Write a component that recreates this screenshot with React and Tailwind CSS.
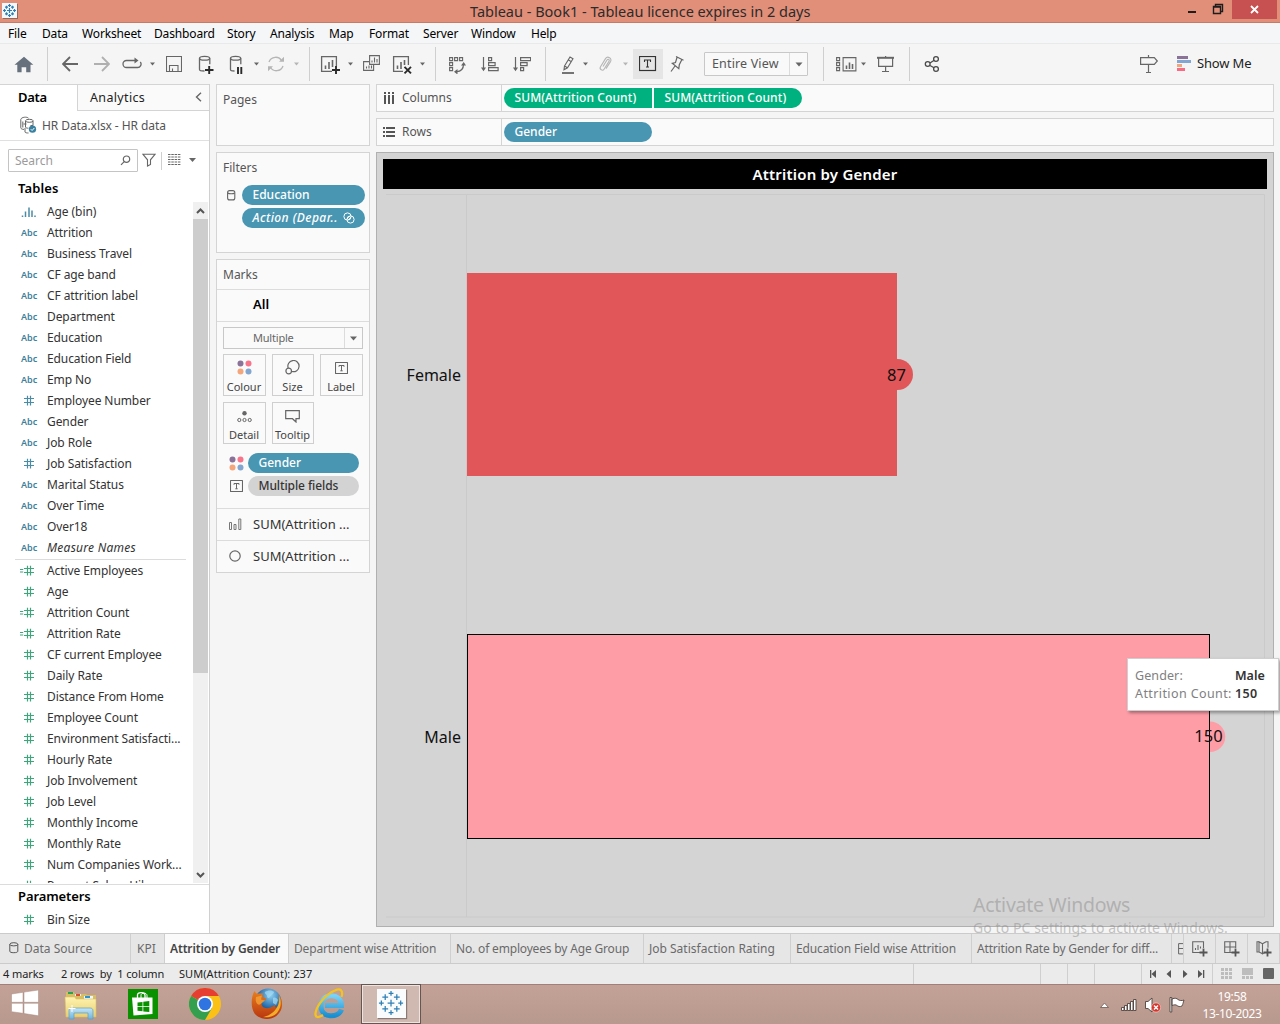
import React from "react";

/* Icon whose drawing uses window coordinates: x/y is the top-left corner of its box. */
function Ico({ x, y = 54, w, h = 20, className = "", children, stroke = "#666" }) {
  return (
    <svg
      width={w}
      height={h}
      viewBox={`${x} ${y} ${w} ${h}`}
      fill="none"
      stroke={stroke}
      strokeWidth="1.3"
      className={`shrink-0 ${className}`}
    >
      {children}
    </svg>
  );
}

function Caret({ className = "", color = "#666" }) {
  return (
    <svg width="7" height="20" viewBox="0 0 7 20" className={`shrink-0 ${className}`}>
      <path d="M1 8.6h5L3.5 11.6z" fill={color} />
    </svg>
  );
}

const Sep = ({ className }) => <div className={`h-[34px] w-px shrink-0 bg-[#cfcfcf] ${className}`} />;

const menus = [
  ["File", "w-[34px]"],
  ["Data", "w-[40px]"],
  ["Worksheet", "w-[72px]"],
  ["Dashboard", "w-[73px]"],
  ["Story", "w-[43px]"],
  ["Analysis", "w-[59px]"],
  ["Map", "w-[40px]"],
  ["Format", "w-[54px]"],
  ["Server", "w-[48px]"],
  ["Window", "w-[60px]"],
  ["Help", "w-[40px]"],
];

function TableauMark({ size }) {
  const plus = (cx, cy, r, k) => <path key={k} d={`M${cx - r} ${cy}h${2 * r}M${cx} ${cy - r}v${2 * r}`} />;
  return (
    <svg width={size} height={size} viewBox="0 0 30 30" fill="none" stroke="#2f7fb5" strokeWidth="1.3">
      {plus(14.5, 14.5, 3.5, "c")}
      {plus(14.5, 4.5, 2.5, "n")}
      {plus(14.5, 24.5, 2.5, "s")}
      {plus(4.5, 14.5, 2.5, "w")}
      {plus(24.5, 14.5, 2.5, "e")}
      {plus(8.5, 8.5, 3, "a")}
      {plus(20.5, 8.5, 3, "b")}
      {plus(8.5, 20.5, 3, "d")}
      {plus(20.5, 20.5, 3, "f")}
    </svg>
  );
}

function TitleBar() {
  return (
    <div className="flex h-[23px] border-b border-[#c77a66] bg-[#e18f79]">
      <div className="mt-[3px] ml-[2px] flex h-[15px] w-[15px] items-center justify-center bg-[#f4f8fb] shadow-[1px_1px_0_#8d6a60]">
        <svg width="15" height="15" viewBox="0 0 15 15" fill="none" stroke="#2f7fb5" strokeWidth="1.2">
          <path d="M5 7.5h5M7.5 5v5M7.5 1v3M6 2.5h3M7.5 11v3M6 12.5h3M1 7.5h3M2.5 6v3M11 7.5h3M12.5 6v3M3 4.2h3M4.5 2.8v3M9 4.2h3M10.5 2.8v3M3 10.8h3M4.5 9.2v3M9 10.8h3M10.5 9.2v3" />
        </svg>
      </div>
      <div className="ml-[453px] w-[345px] text-[14.5px] leading-[23px] whitespace-nowrap text-[#2b2b2b]">
        Tableau - Book1 - Tableau licence expires in 2 days
      </div>
      <svg width="50" height="19" viewBox="0 0 50 19" className="ml-[367px]" fill="none" stroke="#1d1d1d" strokeWidth="1.4">
        <path d="M6 12h8" strokeWidth="2" />
        <path d="M31.5 6.5h7v7h-7zM31 7h8M33.5 6V4.5h7v7H39" />
      </svg>
      <div className="flex h-[19px] w-[45px] items-center justify-center bg-[#c75050]">
        <svg width="9" height="9" viewBox="0 0 9 9" stroke="#fff" strokeWidth="1.8">
          <path d="M1 1l7 7M8 1L1 8" />
        </svg>
      </div>
    </div>
  );
}

function MenuBar() {
  return (
    <div className="flex h-[21px] border-b border-[#e9e9e9] bg-[#f5f6f8] pl-[8px] text-[12px] leading-[21px] tracking-[-0.15px] text-black">
      {menus.map(([m, w]) => (
        <div key={m} className={`shrink-0 whitespace-nowrap ${w}`}>
          {m}
        </div>
      ))}
    </div>
  );
}

const TBox = ({ x, y, w, h, c = "#444" }) => (
  <g stroke={c}>
    <rect x={x + 0.5} y={y + 0.5} width={w - 1} height={h - 1} strokeWidth="1.2" />
    <path
      d={`M${x + w / 2 - 3} ${y + h / 2 - 1.5}v-2h6v2M${x + w / 2} ${y + h / 2 - 3.5}v7M${x + w / 2 - 1.5} ${y + h / 2 + 3.5}h3`}
      strokeWidth="1.1"
    />
  </g>
);

function Toolbar() {
  return (
    <div className="flex h-[40px] items-center bg-[#f5f5f5]">
      <Ico x={14} w={20} className="ml-[14px]" stroke="none">
        <path d="M24 56.8l9.3 8h-2.8v7.4h-4.3v-5h-4.6v5h-4.3v-7.4h-2.8z" fill="#66717d" />
      </Ico>
      <Sep className="ml-[13px]" />
      <Ico x={62} w={16} className="ml-[14px]">
        <path d="M78 64H63.2M70 57l-7 7 7 7" strokeWidth="1.8" />
      </Ico>
      <Ico x={94} w={16} className="ml-[16px]" stroke="#b0b0b0">
        <path d="M94 64h14.8M102 57l7 7-7 7" strokeWidth="1.8" />
      </Ico>
      <Ico x={122} w={20} className="ml-[12px]">
        <path d="M136 60.5h-9.5a3.5 3.5 0 0 0 0 7h11a3.4 3.4 0 0 0 2.8-5.5" />
        <path d="M134.5 57.5l4 3-4 3z" fill="#666" stroke="none" />
      </Ico>
      <Caret className="ml-[7px]" />
      <Ico x={166} w={16} className="ml-[10px]">
        <path d="M166.5 56.5h15v15h-15zM169.500 71v-5.500h8.500V71M172.500 71v-2.500" strokeWidth="1.1" />
      </Ico>
      <Ico x={198} w={16} className="ml-[16px]">
        <path d="M199.5 58.2v11.2c0 .8 2 1.6 5 1.6M209.8 58.2v6" />
        <ellipse cx="204.6" cy="58.2" rx="5.1" ry="1.9" />
        <path d="M205 70h8.5M209.2 66v8" stroke="#2a2a2a" strokeWidth="1.9" />
      </Ico>
      <Ico x={229} w={15} className="ml-[15px]">
        <path d="M230.5 58.2v11.2c0 .8 2 1.6 4 1.6M240.8 58.2v6" />
        <ellipse cx="235.6" cy="58.2" rx="5.1" ry="1.9" />
        <path d="M238 67v7M241.3 67v7" stroke="#2a2a2a" strokeWidth="1.9" />
      </Ico>
      <Caret className="ml-[9px]" />
      <Ico x={267} w={18} className="ml-[7px]" stroke="#b5b5b5">
        <path d="M269 62a7 7 0 0 1 12.8-1M283 66a7 7 0 0 1-12.8 1" />
        <path d="M279 61.8h5v-5zM273 66.2h-5v5z" fill="#b5b5b5" stroke="none" />
      </Ico>
      <Caret className="ml-[8px]" color="#b5b5b5" />
      <Sep className="ml-[9px]" />
      <Ico x={320} w={20} className="ml-[10px]">
        <path d="M332 71.4h-10.4V56.6h14.8V66" />
        <path d="M325.5 69v-3.500M329 69v-7M332.5 67v-7" strokeWidth="1.600" />
        <path d="M332 70h8M336 66v8" stroke="#2a2a2a" strokeWidth="1.9" />
      </Ico>
      <Caret className="ml-[7px]" />
      <Ico x={363} w={18} className="ml-[9px]">
        <path d="M369.6 55.6h9.8v8.8h-9.8zM369 61.6h-5.4v8.8h10V65M372 62.5v-2M374.5 62.5v-5M377 62.5v-3.5M366.5 68.5v-2M369 68.5v-3M371.5 68.5v-3" strokeWidth="1.1" />
      </Ico>
      <Ico x={392} w={20} className="ml-[11px]">
        <path d="M403 71.4h-9.4V56.6h14.8V65" />
        <path d="M397.500 69v-3.500M401 69v-7M404.500 65v-5" strokeWidth="1.600" />
        <path d="M404.5 66.8l6.5 6.5M411 66.8l-6.5 6.5" stroke="#2a2a2a" strokeWidth="1.9" />
      </Ico>
      <Caret className="ml-[7px]" />
      <Sep className="ml-[9px]" />
      <Ico x={448} w={18} className="ml-[12px]">
        <path d="M449.6 57.6h3v3h-3zM454.6 57.6h3v3h-3zM459.6 57.6h3v3h-3zM449.6 62.6h3v3h-3zM449.6 67.6h3v3h-3z" strokeWidth="1.1" />
        <path d="M463.5 64c0 5-3 7.5-7 7.7" />
        <path d="M461 65.5l2.700-3.500 2.300 3.500zM457.500 69v5.500l-3.500-2.700z" fill="#666" stroke="none" />
      </Ico>
      <Ico x={481} w={18} className="ml-[15px]">
        <path d="M483.5 57v13M488.600 57.600h3v3h-3zM488.600 62.600h6.500v3h-6.500zM488.600 67.600h9.500v3h-9.500z" strokeWidth="1.2" />
        <path d="M481 67.500h5l-2.500 3.700z" fill="#666" stroke="none" />
      </Ico>
      <Ico x={513} w={18} className="ml-[14px]">
        <path d="M515.5 57v13M520.600 57.600h10v3h-10zM520.600 62.600h6.500v3h-6.500zM520.600 67.600h3v3h-3z" strokeWidth="1.2" />
        <path d="M513 67.500h5l-2.500 3.700z" fill="#666" stroke="none" />
      </Ico>
      <Sep className="ml-[14px]" />
      <Ico x={561} w={14} className="ml-[15px]">
        <path d="M564.5 66l5.5-9 3 1.8-5.5 9-3.5 2zM564.5 66l3 1.8M568.5 60l2.500 1.500" strokeWidth="1.1" />
        <path d="M562 73h12" strokeWidth="1.8" />
      </Ico>
      <Caret className="ml-[7px]" />
      <Ico x={598} w={15} className="ml-[9px]" stroke="#b5b5b5">
        <path d="M603 66.5l4-6.5c1-1.500 3-.5 2 1.200l-4.800 7.800c-1.500 2.500-5.200.5-3.700-2.200l5-8.200c2-3 7-.3 5 3l-4.500 7" strokeWidth="1.1" />
      </Ico>
      <Caret className="ml-[9px]" color="#b5b5b5" />
      <div className="ml-[4px] flex h-[30px] w-[30px] items-center justify-center bg-[#e5e5e5]">
        <Ico x={639} y={56} w={18} h={16} stroke="#333">
          <TBox x={639} y={56} w={17} h={15} c="#333" />
        </Ico>
      </div>
      <Ico x={670} w={15} className="ml-[7px]">
        <path d="M676 56.5l7.500 3.800M677 57.500l-1.500 5-3.200.8 6.500 5.300.5-3.800 2.500-5M675 66l-4 5.500" strokeWidth="1.2" />
      </Ico>
      <div className="ml-[19px] flex h-[24px] w-[104px] rounded-[1px] border border-[#c8c8c8] bg-[#f9f9f9]">
        <div className="w-[85px] border-r border-[#dcdcdc] pl-[7px] text-[12.5px] leading-[21px] tracking-[0.15px] text-[#555]">Entire View</div>
        <svg width="17" height="22" viewBox="0 0 17 22">
          <path d="M5.5 9.500h7L9 13.500z" fill="#666" />
        </svg>
      </div>
      <Sep className="ml-[15px]" />
      <Ico x={836} w={21} className="ml-[12px]">
        <path d="M836.6 57.600h3v3h-3zM836.600 62.600h3v3h-3zM836.600 67.600h3v3h-3zM843.100 57.600h12.800v13.300h-12.800z" strokeWidth="1.1" />
        <path d="M846.5 69v-3.500M849.500 69v-6.500M852.500 69v-5" strokeWidth="1.6" />
      </Ico>
      <Caret className="ml-[3px]" />
      <Ico x={876} w={19} className="ml-[9px]">
        <path d="M877 57.8h17" strokeWidth="2" />
        <path d="M878.6 58v8.400h14V58M885.600 56v1M885.600 66v5.500M882 71.500h7" strokeWidth="1.2" />
      </Ico>
      <Sep className="ml-[14px]" />
      <Ico x={924} w={16} className="ml-[14px]" stroke="#4b4b4b">
        <path d="M930 63l4.200-2.700M930 65.500l4 2.300" />
        <circle cx="927.7" cy="64" r="2.4" />
        <circle cx="936" cy="59" r="2.4" />
        <circle cx="936" cy="69" r="2.4" />
      </Ico>
      <Ico x={1139} w={20} className="ml-[199px]">
        <path d="M1148.5 55v2M1140.600 57.600h13.700l3 3.400-3 3.400h-13.700zM1148.500 64.500v8M1146 72.500h5" strokeWidth="1.2" />
      </Ico>
      <svg width="15" height="16" viewBox="0 0 15 16" className="ml-[18px] shrink-0">
        <path d="M0 0h11v3H0z" fill="#8a7299" />
        <path d="M0 4h14v3H0z" fill="#82a6cf" />
        <path d="M0 8h5v3H0z" fill="#f3a67c" />
        <path d="M0 12h8v3H0z" fill="#f76c82" />
      </svg>
      <div className="ml-[5px] text-[13px] tracking-[-0.15px] whitespace-nowrap text-[#222]">Show Me</div>
    </div>
  );
}

const dims = [
  ["bin", "Age (bin)"],
  ["abc", "Attrition"],
  ["abc", "Business Travel"],
  ["abc", "CF age band"],
  ["abc", "CF attrition label"],
  ["abc", "Department"],
  ["abc", "Education"],
  ["abc", "Education Field"],
  ["abc", "Emp No"],
  ["num", "Employee Number"],
  ["abc", "Gender"],
  ["abc", "Job Role"],
  ["num", "Job Satisfaction"],
  ["abc", "Marital Status"],
  ["abc", "Over Time"],
  ["abc", "Over18"],
  ["abc", "Measure Names", true],
];
const measures = [
  ["calc", "Active Employees"],
  ["mea", "Age"],
  ["calc", "Attrition Count"],
  ["calc", "Attrition Rate"],
  ["mea", "CF current Employee"],
  ["mea", "Daily Rate"],
  ["mea", "Distance From Home"],
  ["mea", "Employee Count"],
  ["mea", "Environment Satisfacti..."],
  ["mea", "Hourly Rate"],
  ["mea", "Job Involvement"],
  ["mea", "Job Level"],
  ["mea", "Monthly Income"],
  ["mea", "Monthly Rate"],
  ["mea", "Num Companies Work..."],
  ["mea", "Percent Salary Hike"],
];

function FieldIcon({ kind }) {
  if (kind === "abc")
    return <span className="block text-[9px] leading-[22px] font-semibold text-[#3f7f9b]">Abc</span>;
  if (kind === "bin")
    return (
      <svg width="16" height="12" viewBox="0 0 16 12" stroke="#4a8ba5" strokeWidth="1.5" className="mt-[5px]">
        <path d="M1.5 9.500v1.500M4.500 5.500V11M8 1.500V11M11 4.500V11M14 9.500v1.500" />
      </svg>
    );
  const c = kind === "num" ? "#4a8ba5" : "#3ea57c";
  return (
    <svg width="16" height="12" viewBox="0 0 16 12" stroke={c} strokeWidth="1.2" className="mt-[5px] overflow-visible">
      <path d="M3 3.500h10M3 7.500h10M6.500 .8v9.700M9.500 .8v9.700" />
      {kind === "calc" && <path d="M-1 4.500h3.200M-1 7h3.200" />}
    </svg>
  );
}

function FieldRow({ f: [kind, name, it] }) {
  return (
    <div className="flex h-[21px]">
      <div className="w-[26px] shrink-0">
        <FieldIcon kind={kind} />
      </div>
      <div className={`text-[12px] leading-[22px] whitespace-nowrap text-[#333] ${it ? "tracking-[0.25px] italic" : "tracking-[-0.09px]"}`}>{name}</div>
    </div>
  );
}

function DataPane() {
  return (
    <div className="flex w-[210px] shrink-0 flex-col border-r border-[#d0d0d0] bg-white">
      <div className="flex h-[27px] shrink-0">
        <div className="w-[77px] border-t border-[#d4d4d4] pl-[18px] text-[13px] leading-[25px] font-semibold tracking-[-0.3px] text-black">Data</div>
        <div className="flex flex-1 items-center border border-r-0 border-[#d4d4d4] bg-[#fafafa] pl-[12px] text-[12.5px] tracking-[0.35px] text-[#222]">
          <span className="mt-px flex-1">Analytics</span>
          <svg width="7" height="10" viewBox="0 0 7 10" fill="none" stroke="#666" strokeWidth="1.4" className="mr-[7px] mb-[2px]">
            <path d="M6 .8L1.500 5 6 9.200" />
          </svg>
        </div>
      </div>
      <div className="flex h-[30px] shrink-0 border-b border-[#e0e0e0] pl-[20px]">
        <svg width="17" height="18" viewBox="0 0 17 18" fill="none" stroke="#666" strokeWidth="1" className="mt-[5px]">
          <path d="M10.5 9.500H13V5M5.500 5v6c0 .7 1 1.200 3 1.200M.8 3.300v8.500c0 1 1.500 1.600 3.200 1.600M2.800 5.500v6M3.500 8h3M5 12v4c0 .8 2 1 3.500 1" />
          <ellipse cx="9.3" cy="4.8" rx="3.8" ry="1.5" />
          <path d="M.8 3.300C1.500 1 7 .5 8.500 2.200" />
          <circle cx="12.5" cy="13.2" r="3.6" fill="#3a80a0" stroke="none" />
          <path d="M10.8 13.200l1.300 1.300 2.200-2.500" stroke="#fff" />
        </svg>
        <div className="ml-[5px] text-[12px] leading-[29px] tracking-[-0.08px] text-[#555]">HR Data.xlsx - HR data</div>
      </div>
      <div className="mt-[8px] flex h-[23px] shrink-0 items-center pl-[8px]">
        <div className="flex h-[23px] w-[130px] items-center rounded-[1px] border border-[#c4c4c4] pl-[6px] text-[12px] text-[#9b9b9b]">
          <span className="flex-1">Search</span>
          <svg width="11" height="11" viewBox="0 0 11 11" fill="none" stroke="#666" strokeWidth="1.2" className="mr-[6px]">
            <circle cx="6.5" cy="4.2" r="3.2" />
            <path d="M4.2 6.600L1 9.800" />
          </svg>
        </div>
        <svg width="14" height="14" viewBox="0 0 14 14" fill="none" stroke="#666" strokeWidth="1.1" className="mb-px ml-[4px]">
          <path d="M.8 1.200h12.400L8.500 6.800v4.700l-3 1.500V6.800z" />
        </svg>
        <div className="ml-[5px] h-[18px] w-px bg-[#cfcfcf]" />
        <svg width="13" height="11" viewBox="0 0 13 11" stroke="#666" strokeWidth="1" strokeDasharray="2.5 .8" className="mb-[2px] ml-[6px]">
          <path d="M0 .5h13M0 3h13M0 5.500h13M0 8h13M0 10.500h13" />
        </svg>
        <svg width="7" height="4" viewBox="0 0 7 4" className="mb-px ml-[8px]">
          <path d="M0 0h7L3.500 4z" fill="#666" />
        </svg>
      </div>
      <div className="h-[30px] shrink-0 pl-[18px] text-[13px] leading-[32px] font-semibold tracking-[0.1px] text-black">Tables</div>
      <div className="flex h-[681px] shrink-0">
        <div className="w-[193px] overflow-hidden pl-[21px]">
          <div className="-mt-px">
            {dims.map((f) => (
              <FieldRow key={f[1]} f={f} />
            ))}
          </div>
          <div className="mt-px mr-[7px] -ml-[6px] h-px bg-[#dcdcdc]" />
          {measures.map((f) => (
            <FieldRow key={f[1]} f={f} />
          ))}
        </div>
        <div className="flex w-[15px] flex-col bg-[#f0f0f0]">
          <svg width="15" height="17" viewBox="0 0 15 17" fill="none" stroke="#555" strokeWidth="2">
            <path d="M4 11l3.500-3.500L11 11" />
          </svg>
          <div className="h-[454px] bg-[#cdcdcd]" />
          <div className="flex-1" />
          <svg width="15" height="17" viewBox="0 0 15 17" fill="none" stroke="#555" strokeWidth="2">
            <path d="M4 7l3.500 3.500L11 7" />
          </svg>
        </div>
      </div>
      <div className="mt-px border-t border-[#dcdcdc] pl-[18px]">
        <div className="h-[24px] text-[13px] leading-[23px] font-semibold tracking-[-0.1px] text-black">Parameters</div>
        <div className="pl-[3px]">
          <FieldRow f={["mea", "Bin Size"]} />
        </div>
      </div>
    </div>
  );
}

const Dots = () => (
  <svg width="15" height="15" viewBox="0 0 15 15">
    <circle cx="3.5" cy="3.5" r="3" fill="#8a7299" />
    <circle cx="11.5" cy="3.5" r="3" fill="#f7748a" />
    <circle cx="3.5" cy="11.5" r="3" fill="#f3a67c" />
    <circle cx="11.5" cy="11.5" r="3" fill="#82a6cf" />
  </svg>
);
const LabelT = () => (
  <svg width="13" height="12" viewBox="0 0 13 12" fill="none" stroke="#666">
    <rect x=".5" y=".5" width="12" height="11" rx=".5" strokeWidth="1.1" />
    <path d="M4 4.800V3.500h5v1.300M6.500 3.500v5.300M5.300 8.800h2.400" />
  </svg>
);

function MarkButton({ label, children, className }) {
  return (
    <div className={`flex h-[42px] flex-col items-center border border-[#cfcfcf] bg-[#fafafa] pr-px ${className}`}>
      <div className="flex h-[24px] items-center pt-px">{children}</div>
      <div className="text-[11px] leading-[15px] whitespace-nowrap text-[#444]">{label}</div>
    </div>
  );
}

const pill = "flex h-[20px] items-center rounded-full pl-[10.5px] text-[12px] font-medium whitespace-nowrap";

function Cards() {
  return (
    <div className="ml-[6px] flex w-[154px] shrink-0 flex-col">
      <div className="h-[62px] border border-[#d4d4d4] bg-[#fafafa] pt-[6px] pl-[6px] text-[12px] leading-[18px] text-[#555]">Pages</div>
      <div className="mt-[6px] h-[101px] border border-[#d4d4d4] bg-[#fafafa] pl-[6px] text-[12px] text-[#555]">
        <div className="h-[32px] pt-[6px] leading-[18px]">Filters</div>
        <div className="flex items-center">
          <svg width="9" height="11" viewBox="0 0 9 11" fill="none" stroke="#666" strokeWidth="1.1" className="ml-[4px]">
            <rect x=".6" y=".6" width="7.2" height="9.3" rx="2" />
            <path d="M.8 3c1 1 5.800 1 6.800 0" />
          </svg>
          <div className={`${pill} ml-[6px] w-[123px] bg-[#4996b2] text-white`}>Education</div>
        </div>
        <div className={`${pill} mt-[3px] ml-[19px] w-[123px] bg-[#4996b2] tracking-[0.45px] text-white italic`}>
          <span className="w-[90px]">Action (Depar..</span>
          <svg width="12" height="12" viewBox="0 0 12 12" fill="none" stroke="#fff" strokeWidth="1">
            <circle cx="4.5" cy="4.5" r="3.6" />
            <circle cx="7.5" cy="7.5" r="3.6" />
            <path d="M4 7l3.500-3.500M5 8l3-3" strokeWidth=".7" />
          </svg>
        </div>
      </div>
      <div className="mt-[6px] h-[314px] border border-[#d4d4d4] bg-[#fafafa] text-[12px] text-[#555]">
        <div className="h-[30px] border-b border-[#dcdcdc] pl-[6px] leading-[30px]">Marks</div>
        <div className="h-[32px] border-b border-[#dcdcdc] pl-[36px] text-[13px] leading-[29px] font-semibold text-black">All</div>
        <div className="mt-[5px] ml-[6px] flex h-[22px] w-[140px] border border-[#c8c8c8]">
          <div className="w-[121px] border-r border-[#dcdcdc] pl-[29px] text-[11px] leading-[20px] tracking-[-0.2px] text-[#666]">Multiple</div>
          <svg width="17" height="20" viewBox="0 0 17 20">
            <path d="M5 8.500h7L8.500 12.500z" fill="#666" />
          </svg>
        </div>
        <div className="mt-[5px] ml-[6px] flex">
          <MarkButton label="Colour" className="w-[43px]">
            <Dots />
          </MarkButton>
          <MarkButton label="Size" className="ml-[6px] w-[42px]">
            <svg width="15" height="15" viewBox="0 0 15 15" fill="none" stroke="#666" strokeWidth="1.2">
              <path d="M3.2 8A5.600 5.600 0 1 1 7 11.500" />
              <circle cx="3.7" cy="11" r="2.8" />
            </svg>
          </MarkButton>
          <MarkButton label="Label" className="ml-[6px] w-[43px]">
            <LabelT />
          </MarkButton>
        </div>
        <div className="mt-[6px] ml-[6px] flex">
          <MarkButton label="Detail" className="w-[43px]">
            <svg width="15" height="12" viewBox="0 0 15 12" fill="none" stroke="#666" strokeWidth="1" className="mt-[2px]">
              <circle cx="7.5" cy="2.3" r="2.2" fill="#666" stroke="none" />
              <circle cx="2.3" cy="9" r="1.6" />
              <circle cx="7.5" cy="9" r="1.6" />
              <circle cx="12.7" cy="9" r="1.6" />
            </svg>
          </MarkButton>
          <MarkButton label="Tooltip" className="ml-[6px] w-[42px]">
            <svg width="15" height="13" viewBox="0 0 15 13" fill="none" stroke="#666" strokeWidth="1.2" className="mt-[2px]">
              <path d="M.7.7h13.600v8H11v3.300L7.500 8.700H.7z" />
            </svg>
          </MarkButton>
        </div>
        <div className="mt-[9px] ml-[12px] flex items-center">
          <Dots />
          <div className={`${pill} ml-[4px] w-[111px] bg-[#4996b2] text-white`}>Gender</div>
        </div>
        <div className="mt-[3px] ml-[13px] flex items-center">
          <LabelT />
          <div className={`${pill} ml-[5px] w-[111px] bg-[#d3d3d3] tracking-[-0.1px] text-[#333]`}>Multiple fields</div>
        </div>
        <div className="mt-[12px] flex h-[32px] items-center border-t border-[#dcdcdc] pl-[12px]">
          <svg width="13" height="13" viewBox="0 0 13 13" fill="none" stroke="#777" strokeWidth="1">
            <path d="M.5 4.500h2v7h-2zM5 6.500h2v5H5zM9.800 1h2v10.500h-2z" />
          </svg>
          <span className="ml-[11px] text-[13px] text-[#333]">SUM(Attrition ...</span>
        </div>
        <div className="flex h-[32px] items-center border-t border-[#dcdcdc] pl-[12px]">
          <svg width="13" height="13" viewBox="0 0 13 13" fill="none" stroke="#666" strokeWidth="1.2">
            <circle cx="6" cy="6" r="5.2" />
          </svg>
          <span className="ml-[11px] text-[13px] text-[#333]">SUM(Attrition ...</span>
        </div>
      </div>
    </div>
  );
}

function Shelf({ label, icon, className = "", children }) {
  return (
    <div className={`flex h-[28px] items-center border border-[#d4d4d4] bg-[#fafafa] ${className}`}>
      <div className="flex h-full w-[125px] shrink-0 items-center border-r border-[#d4d4d4] pl-[6px]">
        {icon}
        <span className="ml-[7px] text-[12px] text-[#555]">{label}</span>
      </div>
      <div className="flex pl-[2px]">{children}</div>
    </div>
  );
}

function Chart() {
  return (
    <div className="mt-[6px] flex h-[775px] flex-col border border-[#b0b0b0] bg-[#d4d4d4] px-[6px] pt-[6px]">
      <div className="h-[30px] shrink-0 bg-black text-center text-[15px] leading-[30px] font-semibold tracking-[0.2px] text-white">Attrition by Gender</div>
      <svg width="884" height="736" viewBox="383 189 884 736" className="font-['Noto_Sans']">
        <path d="M386 194.500h878.500v722.500H386M466.500 195v722" fill="none" stroke="#cacaca" />
        <rect x="467" y="273" width="430" height="203" fill="#e15759" />
        <circle cx="897.5" cy="374.5" r="15.500" fill="#e15759" />
        <rect x="467.500" y="634.500" width="742" height="204" fill="#ff9da7" stroke="#000" />
        <path d="M1210 721.500a15.300 15.300 0 0 1 0 30.600z" fill="#ff9da7" />
        <g fill="#111" fontSize="16">
          <text x="461" y="381" textAnchor="end">Female</text>
          <text x="461" y="743" textAnchor="end">Male</text>
          <text x="896.500" y="381" textAnchor="middle" fontSize="16.500">87</text>
          <text x="1208.500" y="742" textAnchor="middle" fontSize="16.500">150</text>
        </g>
      </svg>
    </div>
  );
}

const sheetTabs = [
  ["KPI", "w-[34px] pl-[6px]"],
  ["Attrition by Gender", "w-[124px] pl-[5px] bg-[#fafafa] font-semibold tracking-[-0.15px] text-[#444]"],
  ["Department wise Attrition", "w-[162px] pl-[5px] tracking-[-0.17px]"],
  ["No. of employees by Age Group", "w-[193px] pl-[5px] tracking-[-0.17px]"],
  ["Job Satisfaction Rating", "w-[147px] pl-[5px]"],
  ["Education Field wise Attrition", "w-[181px] pl-[5px] tracking-[-0.12px]"],
  ["Attrition Rate by Gender for diff...", "w-[200px] pl-[5px] tracking-[-0.17px]"],
];

function SheetTabs() {
  const cell = "flex h-full shrink-0 items-center justify-center border-r border-[#cfcfcf]";
  return (
    <div className="flex h-[31px] border-y border-[#cbcbcb] bg-[#e6e6e6] text-[12px] leading-[29px] text-[#6a6a6a]">
      <div className="flex w-[131px] shrink-0 border-r border-[#cfcfcf] pl-[9px]">
        <svg width="10" height="12" viewBox="0 0 10 12" fill="none" stroke="#555" className="mt-[8px]">
          <path d="M.8 2.300v7c0 .8 1.500 1.400 4 1.400s4-.6 4-1.400v-7" />
          <ellipse cx="4.8" cy="2.3" rx="4" ry="1.6" />
        </svg>
        <span className="ml-[5px]">Data Source</span>
      </div>
      {sheetTabs.map(([t, c]) => (
        <div key={t} className={`shrink-0 overflow-hidden border-r border-[#cfcfcf] whitespace-nowrap ${c}`}>
          {t}
        </div>
      ))}
      <div className={`${cell} w-[12px] overflow-hidden`}>
        <svg width="5" height="12" viewBox="0 0 5 12" fill="none" stroke="#666" className="ml-[6px]">
          <path d="M6 .6H.6v10.300H6M.6 5.500H6" />
        </svg>
      </div>
      <div className={`${cell} w-[32px]`}>
        <svg width="16" height="16" viewBox="0 0 16 16" fill="none" stroke="#666" strokeWidth="1.1" className="mt-px">
          <path d="M8 11.500H.7V.7h10.800V7M3.500 9V7M6 9V4M8.500 7.500V5.500" />
          <path d="M7.5 11.500h8M11.500 7.500v8" stroke="#555" strokeWidth="1.8" />
        </svg>
      </div>
      <div className={`${cell} w-[32px]`}>
        <svg width="16" height="16" viewBox="0 0 16 16" fill="none" stroke="#666" strokeWidth="1.1" className="mt-px">
          <path d="M8 11.500H.7V.7h11V7M6 .7v10.800M.7 6h11" />
          <path d="M7.5 11.500h8M11.500 7.500v8" stroke="#555" strokeWidth="1.8" />
        </svg>
      </div>
      <div className={`${cell} w-[32px]`}>
        <svg width="16" height="16" viewBox="0 0 16 16" fill="none" stroke="#666" strokeWidth="1.1" className="mt-px">
          <path d="M3 .8L6.500 2.800v10L3 11zM6.500 2.800L10 .8h2v6M6.500 12.800L9 11.500M3 .8H1V11h2" />
          <path d="M7.5 11.500h8M11.500 7.500v8" stroke="#555" strokeWidth="1.8" />
        </svg>
      </div>
    </div>
  );
}

function StatusBar() {
  const s = "h-full shrink-0 border-l border-[#cfcfcf]";
  return (
    <div className="flex h-[20px] bg-[#ebebeb] text-[11px] leading-[20px] whitespace-nowrap text-[#222]">
      <div className="w-[58px] pl-[3px] tracking-[-0.1px]">4 marks</div>
      <div className="w-[121px] pl-[3px] tracking-[-0.1px]">2 rows&nbsp; by&nbsp; 1 column</div>
      <div className="w-[734px] tracking-[0.05px]">SUM(Attrition Count): 237</div>
      <div className={`${s} w-[127px]`} />
      <div className={`${s} w-[27px]`} />
      <div className={`${s} w-[27px]`} />
      <div className={`${s} w-[47px]`} />
      <div className={`${s} w-[71px]`}>
        <svg width="70" height="20" viewBox="0 0 70 20" fill="#555">
          <path d="M8 6h1.300v8H8zM14 6v8l-4.500-4zM29 6v8l-4.500-4zM41 6v8l4.500-4zM56 6v8l4.500-4zM61 6h1.300v8H61z" />
        </svg>
      </div>
      <div className={`${s} w-[68px]`}>
        <svg width="67" height="20" viewBox="0 0 67 20" fill="#bdbdbd">
          <path d="M8 4h3v3H8zM12 4h3v3h-3zM16 4h3v3h-3zM8 8h3v3H8zM12 8h3v3h-3zM16 8h3v3h-3zM8 12h3v3H8zM12 12h3v3h-3zM16 12h3v3h-3zM29 4h11v7H29zM29 12h3v3h-3zM33 12h3v3h-3zM37 12h3v3h-3z" />
          <rect x="50" y="4" width="11" height="11" rx="1" fill="#666" />
        </svg>
      </div>
    </div>
  );
}

function Taskbar() {
  return (
    <div className="flex h-[40px] border-t border-[#a08078] bg-linear-to-b from-[#c3a196] to-[#b8998e]">
      <svg width="28" height="26" viewBox="0 0 28 26" className="mt-[5px] ml-[11px]" fill="#fff" stroke="#a58a81" strokeWidth=".5">
        <path d="M.5 4L12 2.300v10H.5zM13 2.100L27.500 0v12.300H13zM.5 13.300H12v10L.5 21.700zM13 13.300h14.500v12.500L13 23.500z" />
      </svg>
      <svg width="34" height="31" viewBox="0 0 34 31" className="mt-[5px] ml-[25px]">
        <defs>
          <linearGradient id="folder" x2="0" y2="1">
            <stop offset="0" stopColor="#fff3b0" />
            <stop offset="1" stopColor="#e8cf70" />
          </linearGradient>
          <linearGradient id="stand" x2="0" y2="1">
            <stop offset="0" stopColor="#c5e6f7" />
            <stop offset="1" stopColor="#6db4dc" />
          </linearGradient>
        </defs>
        <path d="M2 4V2h8l1 2h11l1 1h9v22H2z" fill="#d8bd62" />
        <path d="M4 2h5v2H4z" fill="#23a455" />
        <path d="M11 4h6v2h-6z" fill="#e9f3f7" />
        <path d="M12 4h4v2h-4z" fill="#d6502f" />
        <path d="M20 6h9v3h-9z" fill="#eef6fa" />
        <path d="M21 6h5v2h-5z" fill="#2d93d0" />
        <path d="M1 7h10l1 2h20v18H2z" fill="url(#folder)" stroke="#d9bf68" strokeWidth=".6" />
        <path d="M5 29v-8c0-2 1-3 3-3h18c2 0 3 1 3 3v8h-5v-6H10v6z" fill="url(#stand)" stroke="#5d9fc4" strokeWidth=".7" />
        <path d="M8 15v7M4.500 18.500h7" stroke="#fff" strokeWidth="1" />
      </svg>
      <svg width="30" height="30" viewBox="0 0 30 30" className="mt-[4px] ml-[30px]">
        <rect width="30" height="30" fill="#0a9100" />
        <path d="M4 8.500h20.500V25L5.500 26.500z" fill="#fff" />
        <path d="M9.500 9.500V6c0-3.500 7.500-3 7.500 .5v3" fill="none" stroke="#fff" strokeWidth="1.3" />
        <path d="M13 9.500V6.500c0-3.500 6-3 6 0v3" fill="none" stroke="#fff" strokeWidth="1" />
        <path d="M9.500 13.500l5-.6v4.300h-5zM15.300 12.800l6-.8v5.200h-6zM9.500 18h5v4.300l-5-.6zM15.300 18h6v5l-6-.6z" fill="#0a9100" />
      </svg>
      <svg width="32" height="32" viewBox="0 0 32 32" className="mt-[3px] ml-[31px]">
        <circle cx="16" cy="16" r="16" fill="#fbc116" />
        <path d="M16 16L2.140 8A16 16 0 0 1 29.860 8H16z" fill="#e63e31" />
        <path d="M2.140 8A16 16 0 0 0 16 32l7-12-7-4z" fill="#34a04f" />
        <circle cx="16" cy="16" r="8" fill="#fff" />
        <circle cx="16" cy="16" r="6.3" fill="#2f74e0" />
      </svg>
      <svg width="32" height="32" viewBox="0 0 32 32" className="mt-[3px] ml-[30px]">
        <defs>
          <radialGradient id="globe" cx=".6" cy=".25" r=".8">
            <stop offset="0" stopColor="#8ed0ef" />
            <stop offset=".6" stopColor="#2166a8" />
            <stop offset="1" stopColor="#12386f" />
          </radialGradient>
          <linearGradient id="fox" x2="0" y2="1">
            <stop offset="0" stopColor="#e8801c" />
            <stop offset="1" stopColor="#b8340f" />
          </linearGradient>
        </defs>
        <circle cx="17" cy="14" r="13.500" fill="url(#globe)" />
        <path d="M14 4c3-2 7-2 9 0 0 2-3 3-4 5s-3 1-3-1-3-2-2-4zM22 10c2-1 4 0 5 2l-2 5-3-2z" fill="#a7dcf2" opacity=".7" />
        <path d="M3.500 3c1 2 2 3 4 2.500l5 0c-2 2-1 4 3 5-1 3-5 2-5 5 0 5 7 7 14 1-1 3 0 3 1 3 3-4 4-8 2-14 4 6 5 14 1 19-6 9-19 8-25 1C-.5 19 0 9 3.500 3z" fill="url(#fox)" />
        <path d="M28 8c3 6 2 12-2 17-4 4-9 5-14 4 7-1 18-8 16-21z" fill="#f6b92f" opacity=".9" />
        <path d="M5 9l6-1.500-1 4 4 1-5 4c-3 1-5-3-4-7.500z" fill="#f7a63a" opacity=".75" />
      </svg>
      <svg width="32" height="32" viewBox="0 0 32 32" className="mt-[3px] ml-[31px]" fill="none">
        <defs>
          <linearGradient id="ie" x2="0" y2="1">
            <stop offset="0" stopColor="#7ad3f7" />
            <stop offset="1" stopColor="#1a8fd0" />
          </linearGradient>
        </defs>
        <path d="M27.500 21.500c-3 9-20.500 9-20.500-3.500C7 4.500 27.500 4.500 27.500 17.500H11" stroke="url(#ie)" strokeWidth="5" />
        <path d="M27.500 9c2-6-1-9.500-6.500-6.500C12 6 3 17 1.500 25c-.6 5 3 5 7.500 2" stroke="#f4c320" strokeWidth="2.2" />
      </svg>
      <div className="-mt-px ml-[15px] flex h-[40px] w-[60px] items-center justify-center border border-[#665651] bg-[#d0b9b1] shadow-[inset_0_0_0_1px_#eee3df]">
        <div className="mb-px h-[29px] w-[29px] bg-[#f9fbfc] shadow-[1px_1px_1px_#8a7a75]">
          <TableauMark size={29} />
        </div>
      </div>
      <div className="flex-1" />
      <svg width="90" height="39" viewBox="1098 985 90 39" className="shrink-0">
        <path d="M1100.500 1007.500l4-4.500 4 4.500z" fill="#fff" stroke="#6b5952" strokeWidth=".8" />
        <g fill="#fff" stroke="#4f4340" strokeWidth=".9">
          <path d="M1121.500 1007.500h2.500v3h-2.500zM1124.500 1005.500h2.500v5h-2.500zM1127.500 1003.500h2.500v7h-2.500zM1130.500 1001.500h2.500v9h-2.500zM1133.500 999.500h2.500v11h-2.500z" />
          <path d="M1145.500 1001.500h2.500l4-3.500v14l-4-3.500h-2.500z" />
          <path d="M1170 997.500h1.800v14.500h-1.800zM1172 999c3-1.500 5-.5 6 .5s4 1.500 6 .5c-1 3-1 4-2 6-2 1-4 .5-5-.5s-3-.8-5 0z" />
        </g>
        <circle cx="1156" cy="1007.500" r="4.600" fill="#d9342b" stroke="#f3dcd8" strokeWidth=".6" />
        <path d="M1154 1005.500l4 4M1158 1005.500l-4 4" stroke="#fff" strokeWidth="1.500" />
      </svg>
      <div className="w-[92px] pt-[3px] pr-[4px] text-center text-[12px] leading-[17px] tracking-[-0.35px] text-white">
        <div>19:58</div>
        <div>13-10-2023</div>
      </div>
    </div>
  );
}

function Tooltip() {
  return (
    <div className="absolute top-[658px] left-[1127px] grid h-[53px] w-[152px] grid-cols-[100px_auto] content-center border border-[#cfcfcf] bg-white pl-[7px] text-[12.5px] leading-[18px] whitespace-nowrap text-[#808080] shadow-[2px_2px_3px_rgba(0,0,0,0.35)]">
      <span className="tracking-[0.1px]">Gender:</span>
      <span className="font-semibold text-[#333]">Male</span>
      <span className="tracking-[0.4px]">Attrition Count:</span>
      <span className="font-semibold tracking-[0.4px] text-[#333]">150</span>
    </div>
  );
}

export default function App() {
  return (
    <div className="relative flex h-[1024px] w-[1280px] flex-col overflow-hidden bg-[#f5f5f5] font-['Noto_Sans',sans-serif]">
      <TitleBar />
      <MenuBar />
      <Toolbar />
      <div className="flex h-[849px] shrink-0">
        <DataPane />
        <Cards />
        <div className="ml-[6px] flex w-[898px] flex-col">
          <Shelf
            label="Columns"
            icon={
              <svg width="12" height="12" viewBox="0 0 12 12" fill="#555">
                <path d="M1 0h2v2H1zM5 0h2v2H5zM9 0h2v2H9zM1 3h2v9H1zM5 3h2v9H5zM9 3h2v9H9z" />
              </svg>
            }
          >
            <div className={`${pill} w-[148px] rounded-r-none bg-[#00b180] tracking-[0.1px] text-white`}>SUM(Attrition Count)</div>
            <div className={`${pill} ml-[2px] w-[148px] rounded-l-none bg-[#00b180] tracking-[0.1px] text-white`}>SUM(Attrition Count)</div>
          </Shelf>
          <Shelf
            label="Rows"
            className="mt-[6px]"
            icon={
              <svg width="12" height="12" viewBox="0 0 12 12" fill="#555">
                <path d="M0 1h2v2H0zM0 5h2v2H0zM0 9h2v2H0zM3 1h9v2H3zM3 5h9v2H3zM3 9h9v2H3z" />
              </svg>
            }
          >
            <div className={`${pill} w-[148px] bg-[#4996b2] text-white`}>Gender</div>
          </Shelf>
          <Chart />
        </div>
      </div>
      <SheetTabs />
      <StatusBar />
      <Taskbar />
      <Tooltip />
      <div className="absolute top-[892px] left-[973px] whitespace-nowrap text-[#8c8c8c]/50">
        <div className="text-[19.5px] leading-[26px] tracking-[-0.25px]">Activate Windows</div>
        <div className="text-[14px] leading-[20px] tracking-[0.08px]">Go to PC settings to activate Windows.</div>
      </div>
    </div>
  );
}
